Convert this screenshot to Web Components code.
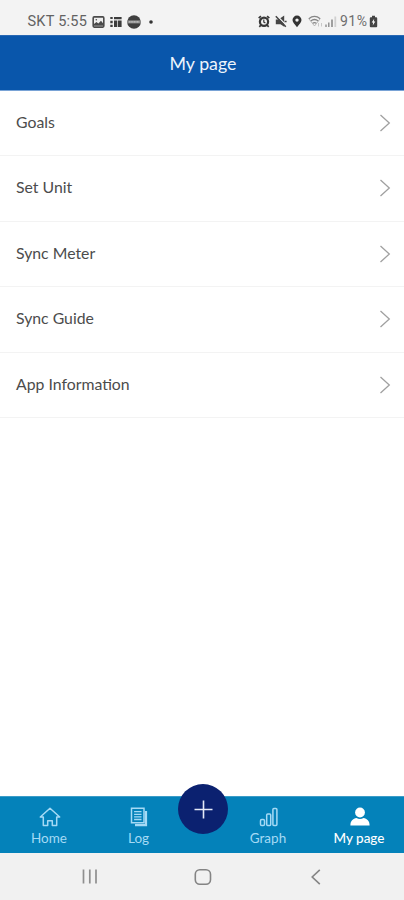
<!DOCTYPE html>
<html lang="en">
<head>
<meta charset="utf-8">
<title>My page</title>
<style>
html,body{margin:0;padding:0}
body{width:404px;height:900px;overflow:hidden;background:#fff;font-family:Lato,"Liberation Sans",sans-serif}
</style>
</head>
<body>
<my-page-app></my-page-app>
<script>
function define(name, html) {
  const t = document.createElement('template');
  t.innerHTML = html;
  customElements.define(name, class extends HTMLElement {
    constructor() {
      super();
      this.attachShadow({ mode: 'open' }).append(t.content.cloneNode(true));
    }
  });
}

define('status-bar', `
<style>
:host{display:flex;justify-content:space-between;height:35px;box-sizing:border-box;padding:7px 26px 0 27.5px;background:#f3f3f3;color:#626262;font:14.5px/29px Roboto,sans-serif}
div{display:flex;align-items:center;height:29px}
svg{display:block;flex:none}
.time{width:64px;white-space:nowrap;letter-spacing:.24px}
.pct{width:29px;margin-left:3px;white-space:nowrap;font-size:14px;letter-spacing:.5px;color:#6e6e6e}
</style>
<div>
  <span class="time">SKT 5:55</span>
  <svg width="13" height="12" viewBox="0 0 13 12"><rect x="1.2" y=".9" width="10.6" height="10.2" rx="1" fill="#eee" stroke="#4a4a4a" stroke-width="1.6"/><path d="M2 9.8V8l2.4-2 2 1.6L9 4.8l2 2.4v2.6z" fill="#4a4a4a"/><circle cx="4.3" cy="3.8" r=".8" fill="#4a4a4a"/></svg>
  <svg style="margin-left:5px" width="12" height="12" viewBox="0 0 12 12" fill="#3c3c3c"><path d="M.3 1h2.4v2H.3zM.3 4.7h2.4v2.6H.3zM.3 8.7h2.4V11H.3zM4 1h7.6v2.3H4zM4 4.4h3.2V11H4zM7.9 4.4h3.7V11H7.9z"/></svg>
  <svg style="margin-left:5px" width="14" height="14" viewBox="0 0 14 14"><circle cx="7" cy="7" r="6.8" fill="#3f3f3f"/><path d="M.2 5.4h13.6v3H.2z" fill="#8f8f8f"/><path d="M2 6.9h10" stroke="#ddd" stroke-width=".8" stroke-dasharray="1.2 .4"/></svg>
  <svg style="margin-left:8px" width="4" height="4"><circle cx="2" cy="2" r="1.8" fill="#333"/></svg>
</div>
<div>
  <svg width="12" height="13" viewBox="0 0 12 13" fill="none" stroke="#383838"><circle cx="6" cy="6.8" r="4.1" stroke-width="2.2"/><path d="M.7 3.2l2.2-2M11.3 3.2l-2.2-2M2.9 10.2l-1.6 1.6M9.1 10.2l1.6 1.6" stroke-width="1.7"/><path d="M5.8 4.6v2.5l1.6 1" stroke-width="1.2"/></svg>
  <svg style="margin-left:5px" width="12" height="13" viewBox="0 0 12 13"><path d="M.8 4.4h2.7L9.2.6v11.2L5.5 9.2H.8z" fill="#454545"/><path d="M2 .8l10 10.2" stroke="#f3f3f3" stroke-width="1.3"/><path d="M.8 1.2l10 10.6M9.600 6.500h2" stroke="#454545" stroke-width="1.5"/></svg>
  <svg style="margin-left:5px" width="10" height="13" viewBox="0 0 10 13"><path d="M5 .6A4.500 4.500 0 0 0 .5 5.100C.5 7.700 3 9.400 5 12.200c2-2.800 4.500-4.500 4.500-7.100A4.500 4.500 0 0 0 5 .6zm0 2.800a1.700 1.700 0 1 1 0 3.400 1.700 1.700 0 0 1 0-3.400z" fill="#333" fill-rule="evenodd"/></svg>
  <svg style="margin-left:6px" width="16" height="13" viewBox="0 0 16 13" fill="none" stroke="#858585"><path d="M.8 3.700q5.700-4.600 11.400 0M2.700 6q3.800-3 7.600 0M4.700 8.200q1.800-1.200 3.600 0" stroke-width="1.300"/><path d="M.8 3.700l5.700 7.300 5.700-7.300" stroke="#aaa" stroke-width=".8"/><path d="M10.500 8v3.500M13.500 11.500V8" stroke="#c8c8c8"/></svg>
  <svg width="13" height="13" viewBox="0 0 13 13"><path d="M2 9.500V12M4.800 7.500V12" stroke="#858585" stroke-width="1.300"/><path d="M8 4.500V12" stroke="#8a8a8a" stroke-width="1.600"/><path d="M11.300 1.500V12" stroke="#d0d0d0" stroke-width="1.800"/></svg>
  <span class="pct">91%</span>
  <svg width="9" height="13" viewBox="0 0 9 13"><path d="M3 .8h3v1.400h1.200a1 1 0 0 1 1 1v8a1 1 0 0 1-1 1H1.800a1 1 0 0 1-1-1v-8a1 1 0 0 1 1-1H3z" fill="#444"/><path d="M5.200 3.700L2.700 7.500h1.500l-.5 3 2.600-4H4.800z" fill="#fff"/></svg>
</div>`);

define('title-bar', `
<style>:host{display:flex;align-items:center;justify-content:center;height:56px;box-sizing:border-box;padding:0 0 1px 2px;background:#0956ab;border-top:1px solid #2968b3;border-bottom:1px solid #79a3d6;color:#edf4fc;font-size:17.8px;line-height:22px}</style>
<slot></slot>`);

define('menu-row', `
<style>
:host{display:flex;align-items:center;justify-content:space-between;height:65.4px;box-sizing:border-box;padding:0 13px 2.4px 16px;border-bottom:1px solid #f3f3f3;color:#4c4c4c;font-size:15.8px;line-height:20px}
svg{display:block;margin-top:2px}
</style>
<span><slot></slot></span>
<svg width="12" height="18" viewBox="0 0 12 18"><path d="M1.5.9L10.3 9 1.5 17.1" fill="none" stroke="#a0a0a0" stroke-width="1.3"/></svg>`);

define('tab-item', `
<style>
:host{display:flex;flex-direction:column;align-items:center;padding-top:10px;color:#a5daf5;font-size:13.5px;line-height:16px;white-space:nowrap}
:host([active]){color:#fff;font-weight:500}
span{margin-top:3px}
::slotted(svg){display:block}
</style>
<slot name="icon"></slot><span><slot></slot></span>`);

define('add-button', `
<style>:host{display:block;width:50px;height:50px;border-radius:50%;background:#0b2170}svg{display:block}</style>
<svg width="50" height="50" viewBox="0 0 50 50"><path d="M25.5 16.500v18M16.500 25.500h18" stroke="#e4e9f7" stroke-width="1.6"/></svg>`);

define('tab-bar', `
<style>
:host{display:grid;grid-template-columns:98px 81px 49px 80px 1fr;height:57px;box-sizing:border-box;background:#0482ba;border-top:1px solid #3b9cc8}
add-button{margin:-13px 0 0 -1px}
.last{padding-left:6px}
</style>
<tab-item>
  <svg slot="icon" width="22" height="20" viewBox="0 0 22 20" fill="none" stroke="currentColor" stroke-width="1.5" stroke-linejoin="round" style="margin-left:2px"><path d="M11 1.200L1.300 10h3v8.500h4.400v-4.700h4.600v4.700h4.400V10h3z"/></svg>Home
</tab-item>
<tab-item>
  <svg slot="icon" width="18" height="20" viewBox="0 0 18 20" fill="none" stroke="currentColor" stroke-width="1.5"><path d="M1.500 1.200H14v14.600H1.500z"/><path d="M4.100 4.700h7.400M4.100 7.300h7.400M4.100 9.900h7.400M4.100 12.500h7.400" stroke-width="1.300"/><path d="M16 4v14.200H5" stroke-width="2.200"/></svg>Log
</tab-item>
<add-button></add-button>
<tab-item>
  <svg slot="icon" width="20" height="20" viewBox="0 0 20 20" fill="none" stroke="currentColor" stroke-width="1.5" style="margin-left:1px"><rect x="1.500" y="12.500" width="4" height="6" rx="1.300"/><rect x="7.700" y="7" width="4" height="11.500" rx="1"/><rect x="13.900" y="1.500" width="4" height="17" rx="1"/></svg>Graph
</tab-item>
<tab-item active class="last">
  <svg slot="icon" width="20" height="20" viewBox="0 0 20 20" fill="currentColor" style="margin-left:1px"><circle cx="10" cy="5.500" r="4.900"/><path d="M.4 18.400c0-4.500 2.600-6.700 6.100-7.300 2 1.200 5 1.200 7 0 3.500.6 6.100 2.800 6.100 7.300z"/></svg>My page
</tab-item>`);

define('system-nav', `
<style>
:host{display:grid;grid-template-columns:66px 47px 179px 48px;justify-content:start;align-items:center;justify-items:center;height:47px;background:#f1f1f1}
svg{display:block}
.r{grid-column:2}.h{grid-column:3}.b{grid-column:4}
</style>
<svg class="r" width="18" height="18" viewBox="0 0 18 18" stroke="#8f8f8f" stroke-width="1.7"><path d="M2.500 1.500v14M8.800 1.500v14M15 1.500v14"/></svg>
<svg class="h" width="18" height="18" viewBox="0 0 18 18" fill="none" stroke="#848484" stroke-width="1.6"><rect x="1.300" y="1.700" width="15.200" height="14.600" rx="4.500"/></svg>
<svg class="b" width="12" height="18" viewBox="0 0 12 18" fill="none" stroke="#858585" stroke-width="1.6"><path d="M9.800 1.800L2.200 9l7.600 7.200"/></svg>`);

define('my-page-app', `
<style>
:host{display:flex;flex-direction:column;width:404px;height:900px;background:#fff}
main{flex:1}
</style>
<status-bar></status-bar>
<title-bar>My page</title-bar>
<main>
  <menu-row>Goals</menu-row>
  <menu-row>Set Unit</menu-row>
  <menu-row>Sync Meter</menu-row>
  <menu-row>Sync Guide</menu-row>
  <menu-row>App Information</menu-row>
</main>
<tab-bar></tab-bar>
<system-nav></system-nav>`);
</script>
</body>
</html>
